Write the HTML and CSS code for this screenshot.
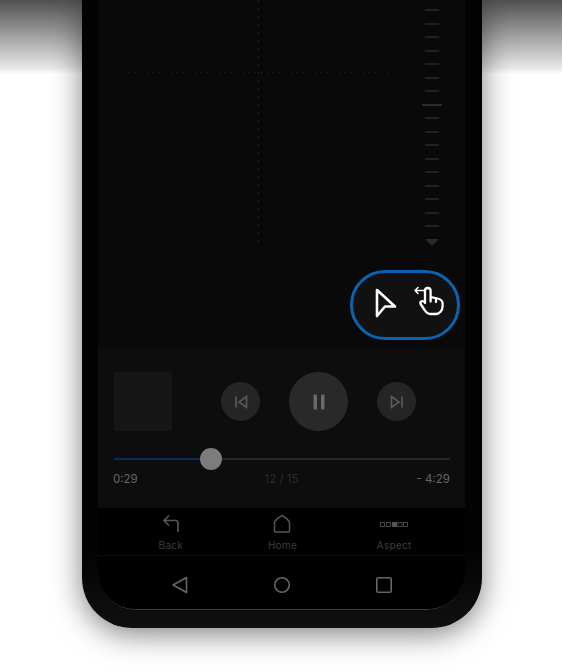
FILE: index.html
```html
<!DOCTYPE html>
<html>
<head>
    <title>Player</title>
    <link rel="stylesheet" href="styles.css">
</head>
<body>
    <div class="phone">
        <div class="screen">
            <div class="viewer">
                <div class="viewer-top">
                    <div class="crosshair"></div>
                    <div class="ruler">
                        <i></i><i></i><i></i><i></i><i></i><i></i><i></i>
                        <i class="long"></i>
                        <i></i><i></i><i></i><i></i><i></i><i></i><i></i><i></i><i></i>
                        <b class="ruler-arrow"></b>
                    </div>
                </div>
                <div class="pointer-pill">
                    <svg class="icon-arrow" width="24" height="32" viewBox="0 0 24 32">
                        <path d="M3 3 L21 19.5 H11 L3 29 Z" fill="none" stroke="#fff" stroke-width="2.6" stroke-linejoin="round"/>
                    </svg>
                    <svg class="icon-hand" width="32" height="30" viewBox="0 0 32 30">
                        <path d="M11 4.5 H2 M5 1.5 L2 4.5 L5 7.5" fill="none" stroke="#fff" stroke-width="1.5" stroke-linecap="round" stroke-linejoin="round"/>
                        <path d="M12 17 V4.8 a2.8 2.8 0 0 1 5.6 0 V11 l7 1.5 c3 .7 5 2 5 5 v2.5 c0 4.5 -3 8 -7.5 8 h-4.5 c-3 0 -4.5 -1.5 -6 -4 l-4 -6 c-1 -2.5 2 -4 4.4 -1.5 z M17.6 11 v4.5 M23 12.5 v3.5" fill="none" stroke="#fff" stroke-width="2.3" stroke-linejoin="round" stroke-linecap="round"/>
                    </svg>
                </div>
            </div>

            <div class="player">
                <div class="player-row">
                    <div class="thumb"></div>
                    <div class="controls">
                        <div class="round-btn">
                            <svg width="16" height="16" viewBox="0 0 16 16">
                                <path d="M3 2.5 V13.5 M13.5 2.5 L6 8 L13.5 13.5 Z" fill="none" stroke="#5c5c5c" stroke-width="1.6"/>
                            </svg>
                        </div>
                        <div class="round-btn big">
                            <svg width="14" height="16" viewBox="0 0 14 16">
                                <rect x="1.5" y="0.5" width="3.5" height="15" rx="1" fill="#6a6a6a"/>
                                <rect x="9" y="0.5" width="3.5" height="15" rx="1" fill="#6a6a6a"/>
                            </svg>
                        </div>
                        <div class="round-btn">
                            <svg width="16" height="16" viewBox="0 0 16 16">
                                <path d="M13 2.5 V13.5 M2.5 2.5 L10 8 L2.5 13.5 Z" fill="none" stroke="#5c5c5c" stroke-width="1.6"/>
                            </svg>
                        </div>
                    </div>
                </div>
                <div class="slider">
                    <div class="slider-done"></div>
                    <div class="slider-knob"></div>
                </div>
                <div class="times">
                    <span>0:29</span>
                    <span class="track-count">12 / 15</span>
                    <span class="time-left">- 4:29</span>
                </div>
            </div>

            <div class="tabs">
                <div class="tab">
                    <svg width="18" height="20" viewBox="0 0 18 20">
                        <path d="M16 18 V9 Q16 6.5 13.5 6.5 H2.5 M7 1.5 L2 6.5 L7 11.5" fill="none" stroke="#555" stroke-width="1.7"/>
                    </svg>
                    <span>Back</span>
                </div>
                <div class="tab">
                    <svg width="18" height="20" viewBox="0 0 18 20">
                        <path d="M1.5 8 Q4 4 9 1.5 Q14 4 16.5 8 V17 Q16.5 18 15.5 18 H2.5 Q1.5 18 1.5 17 Z" fill="none" stroke="#555" stroke-width="1.5" stroke-linejoin="round"/>
                    </svg>
                    <span>Home</span>
                </div>
                <div class="tab">
                    <svg width="28" height="20" viewBox="0 0 28 20">
                        <g fill="none" stroke="#444" stroke-width="1">
                            <rect x="0.5" y="8.5" width="4" height="4"/>
                            <rect x="6.5" y="8.5" width="4" height="4"/>
                            <rect x="18" y="8.5" width="4" height="4"/>
                            <rect x="23.5" y="8.5" width="4" height="4"/>
                        </g>
                        <rect x="12" y="8" width="5" height="5" fill="#555"/>
                    </svg>
                    <span>Aspect</span>
                </div>
            </div>

            <div class="sysbar">
                <svg width="18" height="18" viewBox="0 0 18 18">
                    <path d="M15.5 1.5 V16.5 L2 9 Z" fill="none" stroke="#666" stroke-width="1.6" stroke-linejoin="round"/>
                </svg>
                <svg width="18" height="18" viewBox="0 0 18 18">
                    <circle cx="9" cy="9" r="7.3" fill="none" stroke="#666" stroke-width="1.6"/>
                </svg>
                <svg width="18" height="18" viewBox="0 0 18 18">
                    <rect x="1.8" y="1.8" width="14.4" height="14.4" rx="1.5" fill="none" stroke="#666" stroke-width="1.6"/>
                </svg>
            </div>
        </div>
    </div>
</body>
</html>
```

FILE: styles.css
```css
html, body {
    margin: 0;
    height: 671px;
    overflow: hidden;
}
body {
    font-family: Inter, "Liberation Sans", sans-serif;
    background: #fff linear-gradient(#505050, #e8e8e8 92%, #fff) no-repeat;
    background-size: 562px 74px;
}
.phone {
    width: 400px;
    height: 628px;
    margin-left: 82px;
    padding: 0 17px 18px 16px;
    box-sizing: border-box;
    background: linear-gradient(#030303 88%, #101010);
    border-radius: 0 0 50px 50px;
    box-shadow: 0 6px 30px rgba(0,0,0,0.5);
}
.screen {
    height: 610px;
    display: flex;
    flex-direction: column;
    background: #000;
    border-bottom: 1px solid #3a3a3a;
    border-radius: 0 0 38px 38px;
    box-sizing: border-box;
    overflow: hidden;
}

/* top area */
.viewer {
    height: 348px;
    background: #090909;
}
.viewer-top {
    height: 270px;
    display: flex;
}
.crosshair {
    width: 260px;
    height: 242px;
    margin-left: 31px;
    background:
        linear-gradient(to right, #262626 1px, transparent 1px) 0 72px / 6px 1px repeat-x,
        linear-gradient(#262626 2px, transparent 2px) 129px 0 / 1px 8px repeat-y;
}
.ruler {
    width: 20px;
    margin-left: auto;
    margin-right: 23px;
    padding-top: 9px;
    display: flex;
    flex-direction: column;
    align-items: center;
    gap: 11.5px;
}
.ruler i {
    display: block;
    width: 14px;
    height: 2px;
    background: #202020;
}
.ruler i.long {
    width: 20px;
    background: #2a2a2a;
}
.ruler-arrow {
    display: block;
    border-top: 7px solid #2a2a2a;
    border-left: 7px solid transparent;
    border-right: 7px solid transparent;
}
.pointer-pill {
    width: 110px;
    height: 70px;
    margin-left: 252px;
    padding-left: 8px;
    box-sizing: border-box;
    border: 3px solid #0a64b0;
    border-radius: 35px;
    background: #111;
    display: flex;
    align-items: center;
    justify-content: center;
    gap: 15px;
}
.icon-arrow {
    margin-top: -5px;
}
.icon-hand {
    margin-top: -9px;
}

/* player */
.player {
    height: 160px;
    padding: 24px 15px 0 16px;
    box-sizing: border-box;
    background: #0d0d0d;
}
.player-row {
    display: flex;
    align-items: center;
}
.thumb {
    width: 58px;
    height: 59px;
    background: #161616;
    border-radius: 2px;
}
.controls {
    display: flex;
    align-items: center;
    gap: 29px;
    margin-left: 49px;
}
.round-btn {
    width: 39px;
    height: 39px;
    border-radius: 50%;
    background: #252525;
    display: flex;
    align-items: center;
    justify-content: center;
}
.round-btn.big {
    width: 59px;
    height: 59px;
    background: #292929;
}
.slider {
    height: 2px;
    margin-top: 27px;
    background: #262626;
    display: flex;
    align-items: center;
}
.slider-done {
    width: 86px;
    height: 2px;
    background: #0b2a58;
}
.slider-knob {
    width: 22px;
    height: 22px;
    flex: none;
    border-radius: 50%;
    background: #7c7c7c;
}
.times {
    display: grid;
    grid-template-columns: 1fr auto 1fr;
    margin: 12px 0 0 -1px;
    font-size: 11.5px;
    line-height: 15px;
    color: #666;
}
.track-count {
    color: #2c2c2c;
}
.time-left {
    text-align: right;
}

/* bottom bars */
.tabs {
    height: 48px;
    padding: 0 15px 0 17px;
    display: grid;
    grid-template-columns: repeat(3, 1fr);
    border-bottom: 1px solid #0b0b0b;
    box-sizing: border-box;
    background: #000;
}
.tab {
    display: flex;
    flex-direction: column;
    align-items: center;
    padding-top: 6px;
    gap: 5px;
    font-size: 10px;
    line-height: 12px;
    letter-spacing: 0.3px;
    color: #3e3e3e;
}
.sysbar {
    flex: 1;
    padding: 4px 72px 0 73px;
    display: flex;
    align-items: center;
    justify-content: space-between;
    background: #000;
}
```
